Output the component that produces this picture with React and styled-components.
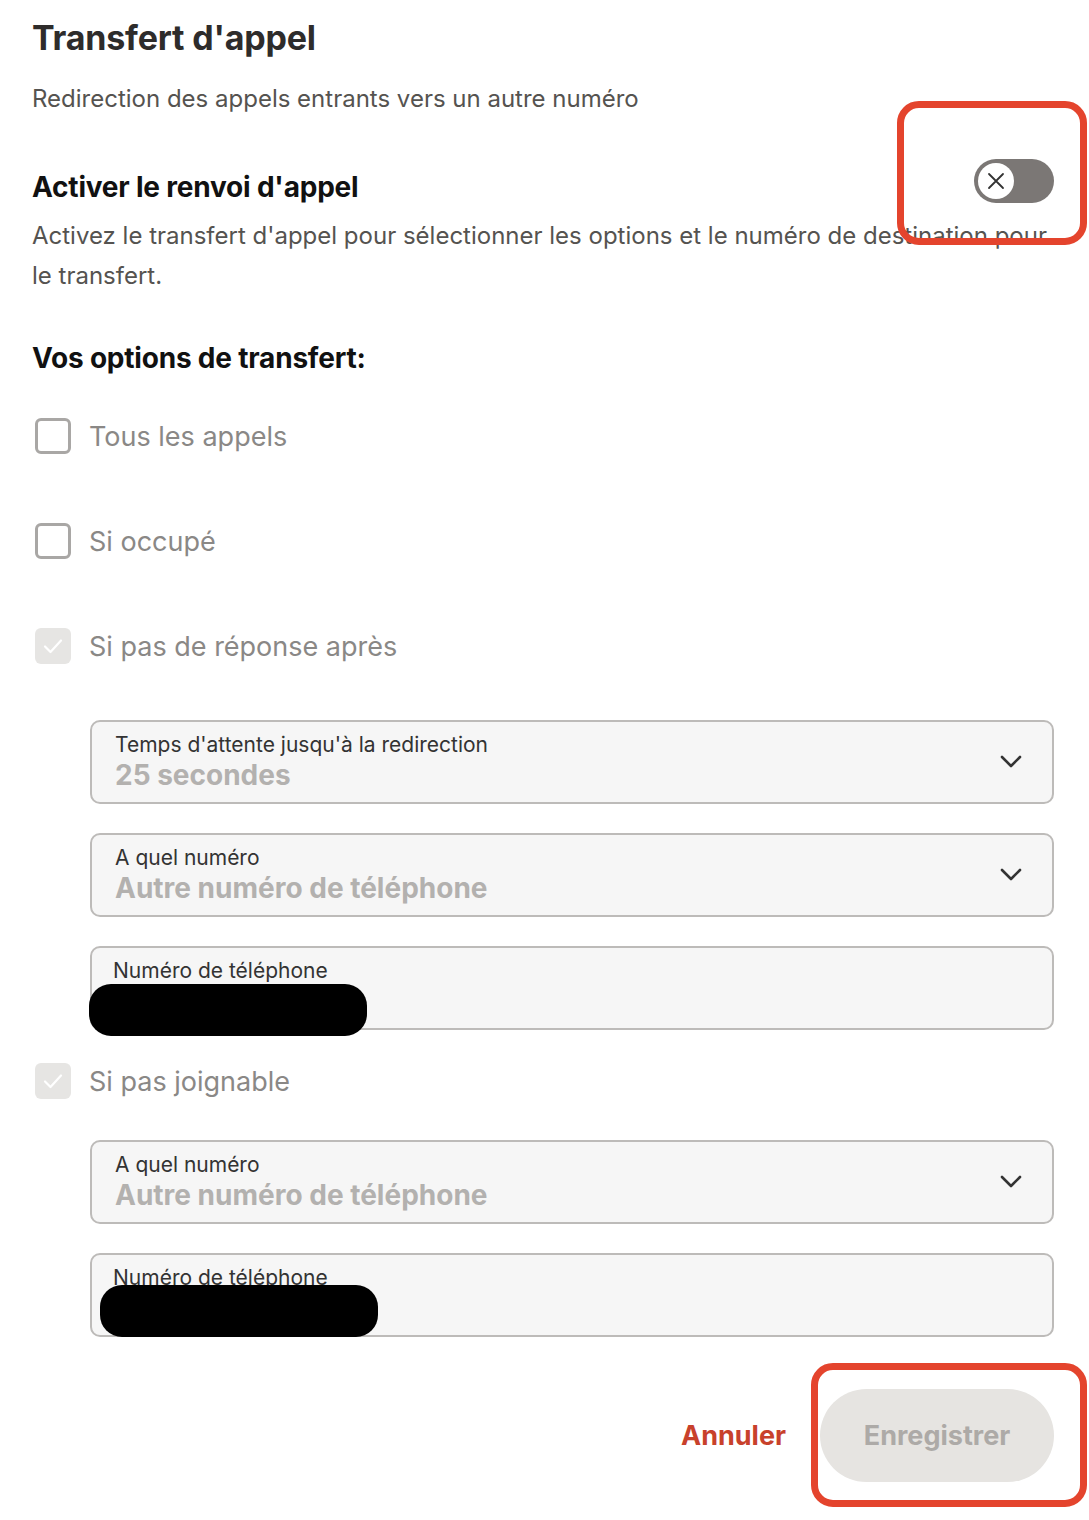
import React from "react";
import styled, { createGlobalStyle } from "styled-components";

const GlobalStyle = createGlobalStyle`
  body {
    margin: 0;
    background: #fff;
    font-family: "Inter", "Liberation Sans", sans-serif;
  }
`;

function Chevron() {
  return (
    <svg width="22" height="14" viewBox="0 0 22 14" fill="none">
      <path d="M2 2l9 9 9-9" stroke="#333" strokeWidth="2.6" strokeLinecap="round" strokeLinejoin="round" />
    </svg>
  );
}

function Check() {
  return (
    <svg width="22" height="18" viewBox="0 0 22 18" fill="none">
      <path d="M3 9.5l5.5 5.5L19 3.5" stroke="#fff" strokeWidth="2.2" strokeLinecap="round" strokeLinejoin="round" />
    </svg>
  );
}

function Checkbox({ label, checked, top }) {
  return (
    <OptionRow $top={top}>
      <Box $checked={checked}>{checked && <Check />}</Box>
      <OptionLabel>{label}</OptionLabel>
    </OptionRow>
  );
}

function SelectField({ label, value, top }) {
  return (
    <Field $top={top}>
      <FieldText>
        <FieldLabel>{label}</FieldLabel>
        <FieldValue>{value}</FieldValue>
      </FieldText>
      <Chevron />
    </Field>
  );
}

function PhoneField({ top, blob }) {
  return (
    <Field $top={top}>
      <FieldText>
        <FieldLabel $shift={-2}>Numéro de téléphone</FieldLabel>
        <FieldValue>&nbsp;</FieldValue>
      </FieldText>
      <Redaction $left={blob.left} $top={blob.top} $width={blob.width} />
    </Field>
  );
}

export default function App() {
  return (
    <Page>
      <GlobalStyle />
      <Title>Transfert d'appel</Title>
      <Subtitle>Redirection des appels entrants vers un autre numéro</Subtitle>

      <ToggleRow>
        <SectionTitle>Activer le renvoi d'appel</SectionTitle>
        <Toggle>
          <Knob>
            <svg width="20" height="20" viewBox="0 0 20 20">
              <path d="M3 3l14 14M17 3L3 17" stroke="#333" strokeWidth="1.8" strokeLinecap="round" />
            </svg>
          </Knob>
        </Toggle>
      </ToggleRow>
      <Description>
        Activez le transfert d'appel pour sélectionner les options et le numéro de destination pour le
        transfert.
      </Description>

      <OptionsTitle>Vos options de transfert:</OptionsTitle>

      <Checkbox label="Tous les appels" top={42} />
      <Checkbox label="Si occupé" top={69} />
      <Checkbox label="Si pas de réponse après" checked top={69} />

      <SelectField top={56} label="Temps d'attente jusqu'à la redirection" value="25 secondes" />
      <SelectField top={29} label="A quel numéro" value="Autre numéro de téléphone" />
      <PhoneField top={29} blob={{ left: -3, top: 36, width: 278 }} />

      <Checkbox label="Si pas joignable" checked top={33} />

      <SelectField top={41} label="A quel numéro" value="Autre numéro de téléphone" />
      <PhoneField top={29} blob={{ left: 8, top: 30, width: 278 }} />

      <Actions>
        <CancelButton>Annuler</CancelButton>
        <SaveButton disabled>Enregistrer</SaveButton>
      </Actions>

      <Highlight $left={897} $top={101} $width={190} $height={144} />
      <Highlight $left={811} $top={1363} $width={276} $height={144} />
    </Page>
  );
}

const Page = styled.div`
  position: relative;
  width: 1089px;
  min-height: 1520px;
  box-sizing: border-box;
  padding: 18px 35px 0 32px;
`;

const Title = styled.h1`
  margin: 0;
  font-size: 34px;
  line-height: 40px;
  font-weight: 700;
  color: #2e2c2b;
  letter-spacing: -0.2px;
`;

const Subtitle = styled.p`
  margin: 23px 0 0;
  font-size: 24px;
  line-height: 36px;
  color: #555350;
`;

const ToggleRow = styled.div`
  display: flex;
  justify-content: space-between;
  align-items: center;
  margin-top: 42px;
  height: 44px;
`;

const SectionTitle = styled.h2`
  margin: 12px 0 0;
  font-size: 28px;
  line-height: 36px;
  font-weight: 700;
  color: #111;
  letter-spacing: -0.2px;
`;

const Toggle = styled.div`
  width: 80px;
  height: 44px;
  border-radius: 22px;
  background: #7b7775;
  display: flex;
  align-items: center;
  padding: 0 4px;
  box-sizing: border-box;
`;

const Knob = styled.div`
  width: 36px;
  height: 36px;
  border-radius: 50%;
  background: #fff;
  display: flex;
  align-items: center;
  justify-content: center;
`;

const Description = styled.p`
  margin: 13px 0 0;
  font-size: 24px;
  line-height: 40px;
  color: #555350;
`;

const OptionsTitle = styled.h2`
  margin: 44px 0 0;
  font-size: 28px;
  line-height: 36px;
  font-weight: 700;
  color: #111;
  letter-spacing: -0.2px;
`;

const OptionRow = styled.div`
  display: flex;
  align-items: center;
  gap: 18px;
  height: 36px;
  margin-top: ${(p) => p.$top}px;
  padding-left: 3px;
`;

const Box = styled.div`
  width: 36px;
  height: 36px;
  box-sizing: border-box;
  border-radius: 6px;
  border: ${(p) => (p.$checked ? "none" : "3px solid #a9a7a5")};
  background: ${(p) => (p.$checked ? "#e6e5e3" : "#fff")};
  display: flex;
  align-items: center;
  justify-content: center;
`;

const OptionLabel = styled.span`
  font-size: 27px;
  color: #8a8886;
`;

const Field = styled.div`
  position: relative;
  margin: ${(p) => p.$top}px 0 0 58px;
  height: 84px;
  box-sizing: border-box;
  border: 2px solid #bdbbb9;
  border-radius: 10px;
  background: #f6f6f6;
  display: flex;
  align-items: center;
  justify-content: space-between;
  padding: 0 30px 0 23px;
`;

const FieldText = styled.div`
  display: flex;
  flex-direction: column;
`;

const FieldLabel = styled.span`
  font-size: 21px;
  line-height: 26px;
  color: #333;
  margin-left: ${(p) => p.$shift || 0}px;
`;

const FieldValue = styled.span`
  font-size: 28px;
  line-height: 34px;
  font-weight: 700;
  color: #b3b1af;
`;

const Redaction = styled.span`
  position: absolute;
  left: ${(p) => p.$left}px;
  top: ${(p) => p.$top}px;
  width: ${(p) => p.$width}px;
  height: 52px;
  border-radius: 22px;
  background: #000;
`;

const Actions = styled.div`
  display: flex;
  justify-content: flex-end;
  align-items: center;
  gap: 34px;
  margin-top: 52px;
`;

const CancelButton = styled.button`
  border: none;
  background: none;
  padding: 0;
  font-family: inherit;
  font-size: 27px;
  font-weight: 700;
  color: #c8412b;
`;

const SaveButton = styled.button`
  width: 234px;
  height: 93px;
  border: none;
  border-radius: 47px;
  background: #e6e4e1;
  font-family: inherit;
  font-size: 27px;
  font-weight: 700;
  color: #adaaa7;
`;

const Highlight = styled.div`
  position: absolute;
  left: ${(p) => p.$left}px;
  top: ${(p) => p.$top}px;
  width: ${(p) => p.$width}px;
  height: ${(p) => p.$height}px;
  box-sizing: border-box;
  border: 7px solid #e4442d;
  border-radius: 22px;
  pointer-events: none;
`;
